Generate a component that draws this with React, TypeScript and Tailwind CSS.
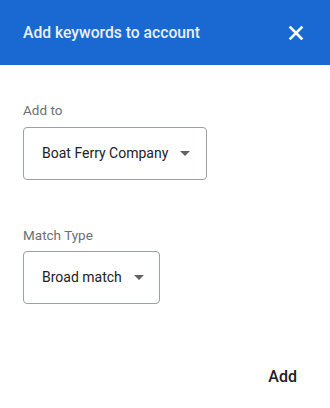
export default function App() {
  return (
    <div className="flex h-[408px] w-[330px] flex-col bg-white" style={{ fontFamily: 'Roboto, "Noto Sans", sans-serif' }}>
      {/* Header */}
      <div className="flex h-[65px] items-center justify-between bg-[#1a68d2] pl-[23px] pr-[25px]">
        <h2 className="text-[15.7px] font-medium text-white/90">Add keywords to account</h2>
        <button className="flex h-[18px] w-[18px] items-center justify-center text-white">
          <svg viewBox="0 0 16 16" className="h-[16px] w-[16px]" fill="none" stroke="currentColor" strokeWidth="2.6" strokeLinecap="square">
            <path d="M2.5 2.5l11 11M13.5 2.5l-11 11" />
          </svg>
        </button>
      </div>

      {/* Body */}
      <div className="flex flex-1 flex-col px-[23px] pt-[37px]">
        <label className="text-[13.5px] leading-[16px] text-[#6f6f6f]">Add to</label>
        <button className="mt-[9px] flex h-[53px] w-[184px] items-center rounded-[4px] border border-[#9aa0a6] pl-[18px]">
          <span className="text-[14px] text-[#202124]">Boat Ferry Company</span>
          <span className="ml-[12px] h-0 w-0 border-x-[5px] border-t-[5px] border-x-transparent border-t-[#5f6368]" />
        </button>

        <label className="mt-[47px] text-[13.5px] leading-[16px] text-[#6f6f6f]">Match Type</label>
        <button className="mt-[8px] flex h-[53px] w-[137px] items-center rounded-[4px] border border-[#9aa0a6] pl-[18px]">
          <span className="text-[14px] text-[#202124]">Broad match</span>
          <span className="ml-[12px] h-0 w-0 border-x-[5px] border-t-[5px] border-x-transparent border-t-[#5f6368]" />
        </button>

        <div className="mt-auto flex justify-end pb-[19px] pr-[10px]">
          <button className="text-[16px] font-medium text-[#202124]">Add</button>
        </div>
      </div>
    </div>
  );
}
